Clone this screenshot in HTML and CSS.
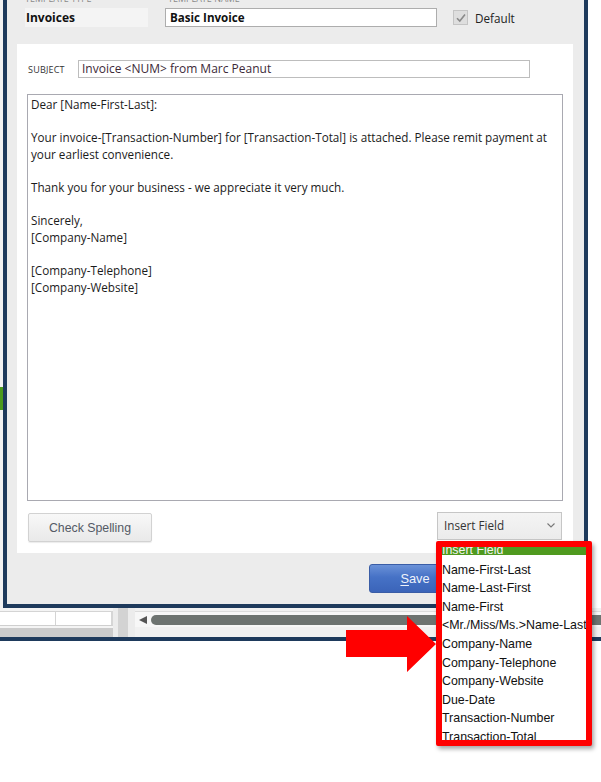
FILE: index.html
```html
<!DOCTYPE html>
<html lang="en">
<head>
    <meta charset="UTF-8">
    <meta name="viewport" content="width=device-width, initial-scale=1.0">
    <title>Email Template</title>
    <link rel="stylesheet" href="styles.css">
</head>
<body>
    <div class="screen">
        <div class="upper">
            <div class="app-edge"><div class="edge-green"></div></div>

            <div class="dialog">
                <div class="head">
                    <div class="head-labels">
                        <span class="lbl-type">TEMPLATE TYPE</span>
                        <span class="lbl-name">TEMPLATE NAME</span>
                    </div>
                    <div class="head-fields">
                        <div class="tpl-type">Invoices</div>
                        <div class="tpl-name">Basic Invoice</div>
                        <div class="default">
                            <span class="check">
                                <svg width="12" height="12" viewBox="0 0 12 12"><path d="M2 6.2 L4.8 9 L10 2.6" fill="none" stroke="#8a8a8a" stroke-width="1.6"/></svg>
                            </span>
                            Default
                        </div>
                    </div>
                </div>

                <div class="panel">
                    <div class="subject-row">
                        <span class="subject-label">SUBJECT</span>
                        <div class="subject-input">Invoice &lt;NUM&gt; from Marc Peanut</div>
                    </div>

                    <div class="body-text">
                        <p>Dear [Name-First-Last]:</p>
                        <p>Your invoice-[Transaction-Number] for [Transaction-Total] is attached. Please remit payment at<br>your earliest convenience.</p>
                        <p>Thank you for your business - we appreciate it very much.</p>
                        <p>Sincerely,<br>[Company-Name]</p>
                        <p>[Company-Telephone]<br>[Company-Website]</p>
                    </div>

                    <div class="panel-actions">
                        <button class="btn-spell">Check Spelling</button>
                        <div class="insert-select">
                            <span>Insert Field</span>
                            <svg width="8" height="5" viewBox="0 0 8 5"><path d="M0.5 0.5 L4 4 L7.5 0.5" fill="none" stroke="#777" stroke-width="1.1"/></svg>
                        </div>
                    </div>
                </div>

                <div class="dialog-foot">
                    <button class="btn-save"><u>S</u>ave</button>
                </div>
            </div>
        </div>

        <div class="behind">
            <div class="grid-part">
                <div class="grid-row"><span></span><span></span></div>
                <div class="grid-shade"></div>
            </div>
            <div class="splitter"></div>
            <div class="scroll-part">
                <div class="scrollbar">
                    <span class="scroll-arrow"></span>
                    <span class="scroll-thumb"></span>
                </div>
            </div>
        </div>

        <div class="field-list">
            <div class="field-current"><span>Insert Field</span></div>
            <ul>
                <li>Name-First-Last</li>
                <li>Name-Last-First</li>
                <li>Name-First</li>
                <li>&lt;Mr./Miss/Ms.&gt;Name-Last</li>
                <li>Company-Name</li>
                <li>Company-Telephone</li>
                <li>Company-Website</li>
                <li>Due-Date</li>
                <li>Transaction-Number</li>
                <li>Transaction-Total</li>
            </ul>
        </div>

        <svg class="pointer" width="92" height="58" viewBox="0 0 92 58">
            <polygon points="0,15 61,15 61,1 90,29 61,57 61,42 0,42" fill="#ff0000"/>
        </svg>
    </div>
</body>
</html>
```

FILE: styles.css
```css
body { margin: 0; background: #fff; font-family: "Open Sans", "Noto Sans", sans-serif; color: #1b1b1b; }
.screen { position: relative; width: 601px; height: 782px; overflow: hidden; }
.upper { display: flex; }

.app-edge { width: 3px; background: #f2f2f2; }
.edge-green { margin-top: 387px; height: 23px; background: #4c9a1c; }

.dialog { width: 577px; height: 604px; background: #ececec; border: 4px solid #1e3a5c; border-top: none; }

.head { padding-left: 18px; }
.head-labels { height: 8px; margin-top: -5px; font-size: 9px; line-height: 8px; color: #8a8a8a; display: flex; }
.lbl-type { width: 143px; }
.head-fields { display: flex; align-items: center; margin-top: 5px; height: 19px; }
.tpl-type { width: 122px; height: 19px; line-height: 19px; padding-left: 1px; background: #f4f4f4; font-weight: 700; font-size: 12px; color: #111; }
.tpl-name { width: 266px; height: 17px; line-height: 17px; margin-left: 17px; padding-left: 4px; background: #fff; border: 1px solid #adadad; font-weight: 700; font-size: 11.6px; color: #111; }
.default { display: flex; align-items: center; margin-left: 16px; font-size: 11.7px; color: #222; }
.check { width: 13px; height: 13px; margin-right: 7px; background: #dedede; border: 1px solid #c4c4c4; display: flex; align-items: center; justify-content: center; }

.panel { width: 556px; height: 493px; margin: 17px 0 0 10px; padding-top: 16px; background: #fff; }
.subject-row { display: flex; align-items: center; padding-left: 11px; height: 18px; }
.subject-label { width: 50px; font-size: 9px; color: #333; letter-spacing: 0.2px; }
.subject-input { width: 447px; height: 16px; line-height: 16px; padding-left: 3px; border: 1px solid #bdbdbd; font-size: 12px; color: #3d2a38; }

.body-text { width: 528px; height: 404px; margin: 16px 0 0 10px; padding: 1px 3px 0; border: 1px solid #a9a9b1; font-size: 11.7px; line-height: 16.6px; white-space: nowrap; }
.body-text p { margin: 0 0 16.6px; }

.panel-actions { display: flex; justify-content: space-between; margin-top: 11px; padding: 0 11px 0 11px; }
.btn-spell { width: 124px; height: 29px; margin-top: 1px; border: 1px solid #d2d2d2; border-radius: 2px; background: linear-gradient(#f8f8f8, #e9e9e9); box-shadow: 0 1px 1px rgba(0,0,0,0.08); font-family: "Liberation Sans", Arial, sans-serif; font-size: 12.3px; color: #545a66; padding: 0; }
.insert-select { width: 125px; height: 28px; box-sizing: border-box; border: 1px solid #c6c6c6; background: linear-gradient(#f4f4f4, #ebebeb); display: flex; align-items: center; justify-content: space-between; padding: 0 6px 2px 6px; font-size: 11.7px; color: #333; }

.dialog-foot { padding: 11px 0 11px 362px; }
.btn-save { display: block; width: 92px; height: 29px; border: 1px solid #3a5da6; border-radius: 3px; background: linear-gradient(#6a91d8, #4672c6 45%, #3b64b9); color: #eef3fb; font-family: "Liberation Sans", Arial, sans-serif; font-size: 12.8px; padding: 0; text-align: center; }
.btn-save u { text-underline-offset: 2px; }

.behind { display: flex; height: 29px; border-bottom: 4px solid #1e3a5c; background: #ececec; }
.grid-part { width: 113px; padding-top: 3px; background: #f4f4f4; }
.grid-row { display: flex; height: 13px; background: #fff; border-top: 1px solid #d4d4d4; border-bottom: 1px solid #cfcfcf; border-right: 2px solid #d6d6d6; }
.grid-row span { width: 55px; border-right: 1px solid #d4d4d4; }
.grid-row span:last-child { border-right: none; }
.grid-shade { height: 9px; margin-top: 2px; background: #cbcbcb; }
.splitter { width: 10px; margin-left: 5px; background: #d3d3d3; }
.scroll-part { flex: 1; margin-left: 7px; padding-top: 3px; background: #f1f1f1; }
.scrollbar { display: flex; align-items: center; height: 15px; border-top: 1px solid #dcdcdc; background: #f7f7f7; }
.scroll-arrow { width: 0; height: 0; margin-left: 4px; border-top: 4px solid transparent; border-bottom: 4px solid transparent; border-right: 8px solid #555; }
.scroll-thumb { flex: 1; height: 10px; margin-left: 4px; border-radius: 5px 0 0 5px; background: #6d7370; }

.field-list { position: absolute; left: 436px; top: 541px; width: 144px; height: 193px; border: 6px solid #ff0000; border-radius: 2px; background: #fff; overflow: hidden; box-shadow: 2px 3px 4px rgba(0,0,0,0.35); font-family: "Liberation Sans", Arial, sans-serif; font-size: 12.4px; color: #111; }
.field-current { height: 8px; overflow: hidden; background: #4f9a1f; color: #f2f2f2; }
.field-current span { display: block; line-height: 18.6px; margin-top: -6.3px; }
.field-list ul { list-style: none; margin: 5.7px 0 0; padding: 0; }
.field-list li { line-height: 18.57px; white-space: nowrap; }

.pointer { position: absolute; left: 346px; top: 615px; }
```
